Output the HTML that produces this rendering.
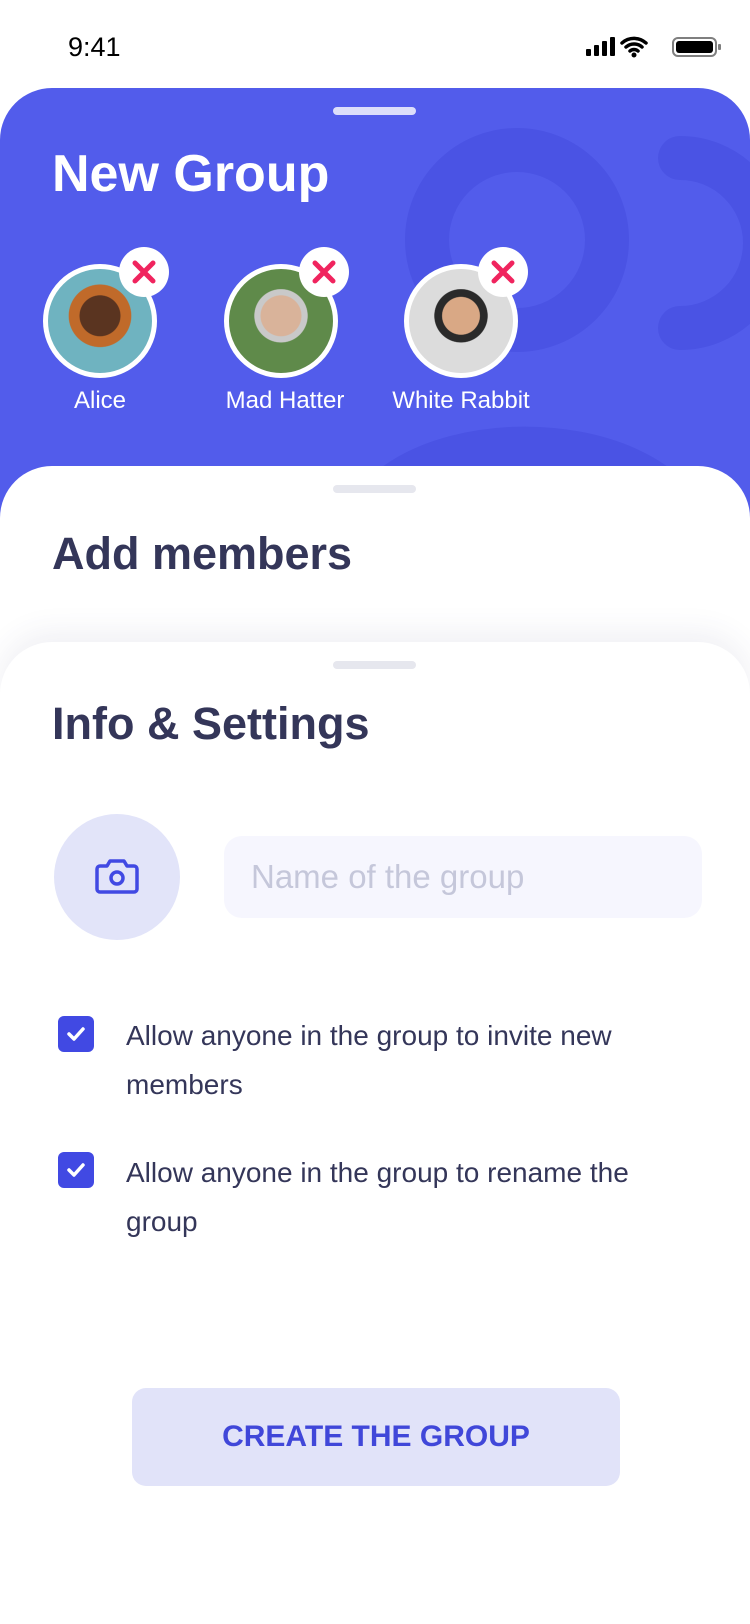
<!DOCTYPE html>
<html><head><meta charset="utf-8"><style>
*{margin:0;padding:0;box-sizing:border-box}
body{width:750px;height:1624px;background:#fff;font-family:"Liberation Sans",sans-serif;position:relative;overflow:hidden}
.abs{position:absolute}
.blue{left:0;top:88px;width:750px;height:460px;background:#525CEB;border-radius:52px 52px 0 0;overflow:hidden}
.handle{width:83px;height:8px;border-radius:4px;left:333px}
.av{width:114px;height:114px;border-radius:50%;border:5px solid #fff;overflow:hidden}
.name{color:#fff;font-size:24px;width:200px;text-align:center;top:387px}
.card{left:0;width:750px;background:#fff;border-radius:52px 52px 0 0}
h2{position:absolute;left:52px;font-size:45px;font-weight:bold;color:#343659}
.cb{left:58px;width:36px;height:36px;border-radius:6px;background:#4149E3}
.txt{left:126px;width:560px;font-size:28px;line-height:49px;color:#343659}
</style></head><body>
<div class="abs" style="left:68px;top:32px;font-size:27px;color:#000">9:41</div>
<svg class="abs" style="left:586px;top:35px" width="140" height="24" viewBox="0 0 140 24">
<rect x="0" y="14" width="5" height="7" rx="1" fill="#000"/><rect x="8" y="10" width="5" height="11" rx="1" fill="#000"/><rect x="16" y="6" width="5" height="15" rx="1" fill="#000"/><rect x="24" y="2" width="5" height="19" rx="1" fill="#000"/>
<path d="M36 8a18 18 0 0 1 24 0M40 12a12 12 0 0 1 16 0M44 16a6 6 0 0 1 8 0" stroke="#000" stroke-width="3.5" fill="none" stroke-linecap="round"/><circle cx="48" cy="20" r="2.5" fill="#000"/>
<rect x="87" y="3" width="43" height="18" rx="5" stroke="#000" stroke-width="2" fill="none" opacity=".5"/><rect x="90" y="6" width="37" height="12" rx="3" fill="#000"/><rect x="132" y="9" width="3" height="6" rx="1" fill="#000" opacity=".5"/>
</svg>
<div class="abs blue">
<svg class="abs" style="left:0;top:0" width="750" height="460">
<circle cx="517" cy="152" r="90" stroke="#4A53E4" stroke-width="44" fill="none"/>
<path d="M680 70a85 85 0 0 1 0 170" stroke="#4A53E4" stroke-width="44" fill="none" stroke-linecap="round"/>
<path d="M360 460a140 80 0 0 1 330 -10" stroke="#4A53E4" stroke-width="44" fill="none"/>
</svg>
<div class="abs handle" style="top:19px;background:#DCDEFA"></div>
<div class="abs" style="left:52px;top:56px;font-size:52px;font-weight:bold;color:#fff">New Group</div>
</div>
<div class="abs av" style="left:43px;top:264px;background:radial-gradient(circle at 50% 45%,#5a3420 0 26%,#c06a2a 27% 40%,#6fb3c0 41%)"></div>
<div class="abs av" style="left:224px;top:264px;background:radial-gradient(circle at 50% 45%,#d9b39a 0 26%,#c9c9c9 27% 34%,#5f8a4a 35%)"></div>
<div class="abs av" style="left:404px;top:264px;background:radial-gradient(circle at 50% 45%,#d9a885 0 24%,#2a2a2a 25% 34%,#dcdcdc 35%)"></div>
<svg class="abs" style="left:0;top:0" width="750" height="320">
<g fill="#fff"><circle cx="144" cy="272" r="25"/><circle cx="324" cy="272" r="25"/><circle cx="503" cy="272" r="25"/></g>
<g stroke="#F0245E" stroke-width="5" stroke-linecap="round"><path d="M135 263l18 18M153 263l-18 18M315 263l18 18M333 263l-18 18M494 263l18 18M512 263l-18 18"/></g>
</svg>
<div class="abs name" style="left:0">Alice</div>
<div class="abs name" style="left:185px">Mad Hatter</div>
<div class="abs name" style="left:361px">White Rabbit</div>
<div class="abs card" style="top:466px;height:300px"></div>
<div class="abs handle" style="top:485px;background:#E6E7EE"></div>
<h2 style="top:528px">Add members</h2>
<div class="abs card" style="top:642px;height:982px;box-shadow:0 -10px 30px rgba(60,60,120,0.08)"></div>
<div class="abs handle" style="top:661px;background:#E6E7EE"></div>
<h2 style="top:698px">Info &amp; Settings</h2>
<div class="abs" style="left:54px;top:814px;width:126px;height:126px;border-radius:50%;background:#E2E4F9"></div>
<svg class="abs" style="left:92px;top:852px" width="50" height="50" viewBox="0 0 50 50"><path d="M8 14h7l3-5h14l3 5h7a3 3 0 0 1 3 3v20a3 3 0 0 1-3 3H8a3 3 0 0 1-3-3V17a3 3 0 0 1 3-3z" stroke="#4149E3" stroke-width="3.5" fill="none" stroke-linejoin="round"/><circle cx="25" cy="26" r="6" stroke="#4149E3" stroke-width="3.5" fill="none"/></svg>
<div class="abs" style="left:224px;top:836px;width:478px;height:82px;border-radius:18px;background:#F6F6FE"></div>
<div class="abs" style="left:251px;top:858px;font-size:33px;color:#C5C7DA">Name of the group</div>
<div class="abs cb" style="top:1016px"></div>
<div class="abs cb" style="top:1152px"></div>
<svg class="abs" style="left:58px;top:1016px" width="36" height="180"><path d="M11 18l5 5 9-10M11 154l5 5 9-10" stroke="#fff" stroke-width="3.5" fill="none" stroke-linecap="round" stroke-linejoin="round"/></svg>
<div class="abs txt" style="top:1011px">Allow anyone in the group to invite new members</div>
<div class="abs txt" style="top:1148px">Allow anyone in the group to rename the group</div>
<div class="abs" style="left:132px;top:1388px;width:488px;height:98px;border-radius:14px;background:#E1E3F9;color:#4047D9;font-size:30px;font-weight:bold;text-align:center;line-height:98px">CREATE THE GROUP</div>
</body></html>
